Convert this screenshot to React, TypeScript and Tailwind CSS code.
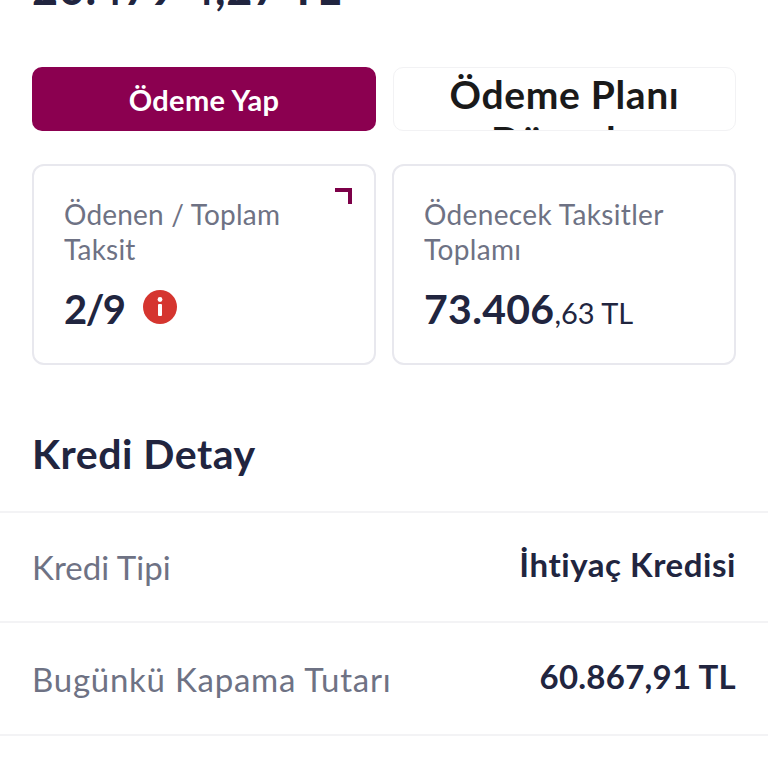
export default function App() {
  const font = "[font-family:'Lato','Noto_Sans',sans-serif]";
  return (
    <div className={`w-[768px] h-[768px] overflow-hidden bg-white flex flex-col ${font}`}>
      <div className="h-[67px] px-8 overflow-hidden shrink-0 flex flex-col justify-end pb-[56px]">
        <div className="text-[45px] leading-[45px] font-bold tracking-[0.6px] text-[#21253f] whitespace-pre">20.479 4,27 TL</div>
      </div>
      <div className="px-8 flex gap-[17px] h-[64px] shrink-0">
        <button className="w-[344px] rounded-[10px] bg-[#8b0050] text-white font-bold flex items-center justify-center pt-[2px]">
          <span className="text-[29px] tracking-[0.35px]">Ödeme Yap</span>
        </button>
        <div className="w-[343px] rounded-[10px] border border-[#f2f2f4] overflow-hidden bg-white text-center text-[#1a1a1a] text-[39px] leading-[46px] font-bold pt-[3px] px-10 tracking-[0.65px]">
          Ödeme Planı Düzenle
        </div>
      </div>
      <div className="px-8 mt-[33px] flex gap-4 shrink-0">
        <div className="relative w-[344px] h-[201px] rounded-[12px] border-2 border-[#e8e8ee] px-[30px] pt-[31px]">
          <div className="absolute right-[22px] top-[22px] w-[17px] h-[16px] border-t-[4px] border-r-[4px] border-[#7c0048]" />
          <div className="text-[28px] leading-[35px] text-[#6e7284] tracking-[0.2px]">Ödenen / Toplam<br />Taksit</div>
          <div className="flex items-center gap-[18px] mt-[17px]">
            <span className="text-[40px] leading-[50px] font-bold text-[#21253f] tracking-[-1.5px]">2/9</span>
            <svg viewBox="0 0 34 34" className="w-[34px] h-[34px] -mt-[5px]" aria-hidden="true">
              <circle cx="17" cy="17" r="17" fill="#d5352f" />
              <rect x="15" y="14" width="4" height="12" rx="1" fill="#fff" />
              <circle cx="17" cy="9.5" r="2.4" fill="#fff" />
            </svg>
          </div>
        </div>
        <div className="w-[344px] h-[201px] rounded-[12px] border-2 border-[#e8e8ee] px-[30px] pt-[31px]">
          <div className="text-[28px] leading-[35px] text-[#6e7284] tracking-[0.35px]">Ödenecek Taksitler<br />Toplamı</div>
          <div className="mt-[17px] leading-[50px] text-[#21253f] whitespace-nowrap">
            <span className="text-[41px] font-bold tracking-[0.3px]">73.406</span>
            <span className="text-[29px]">,63 TL</span>
          </div>
        </div>
      </div>
      <div className="px-8 mt-[44px] h-[104px] shrink-0 text-[41px] leading-[90px] font-bold text-[#21253f] border-b-2 border-[#f3f3f5] tracking-[0.5px]">Kredi Detay</div>
      <div className="px-8 h-[110px] shrink-0 flex justify-between items-center border-b-2 border-[#f3f3f5]">
        <span className="text-[33px] text-[#6e7284] tracking-[0.05px] mt-[2px]">Kredi Tipi</span>
        <span className="text-[33px] font-bold text-[#21253f] -mt-1 tracking-[0.55px]">İhtiyaç Kredisi</span>
      </div>
      <div className="px-8 h-[113px] shrink-0 flex justify-between items-center border-b-2 border-[#f3f3f5]">
        <span className="text-[33px] text-[#6e7284] tracking-[0.75px] mt-[2px]">Bugünkü Kapama Tutarı</span>
        <span className="text-[33px] font-bold text-[#21253f] -mt-1 tracking-[0.25px]">60.867,91 TL</span>
      </div>
    </div>
  );
}
